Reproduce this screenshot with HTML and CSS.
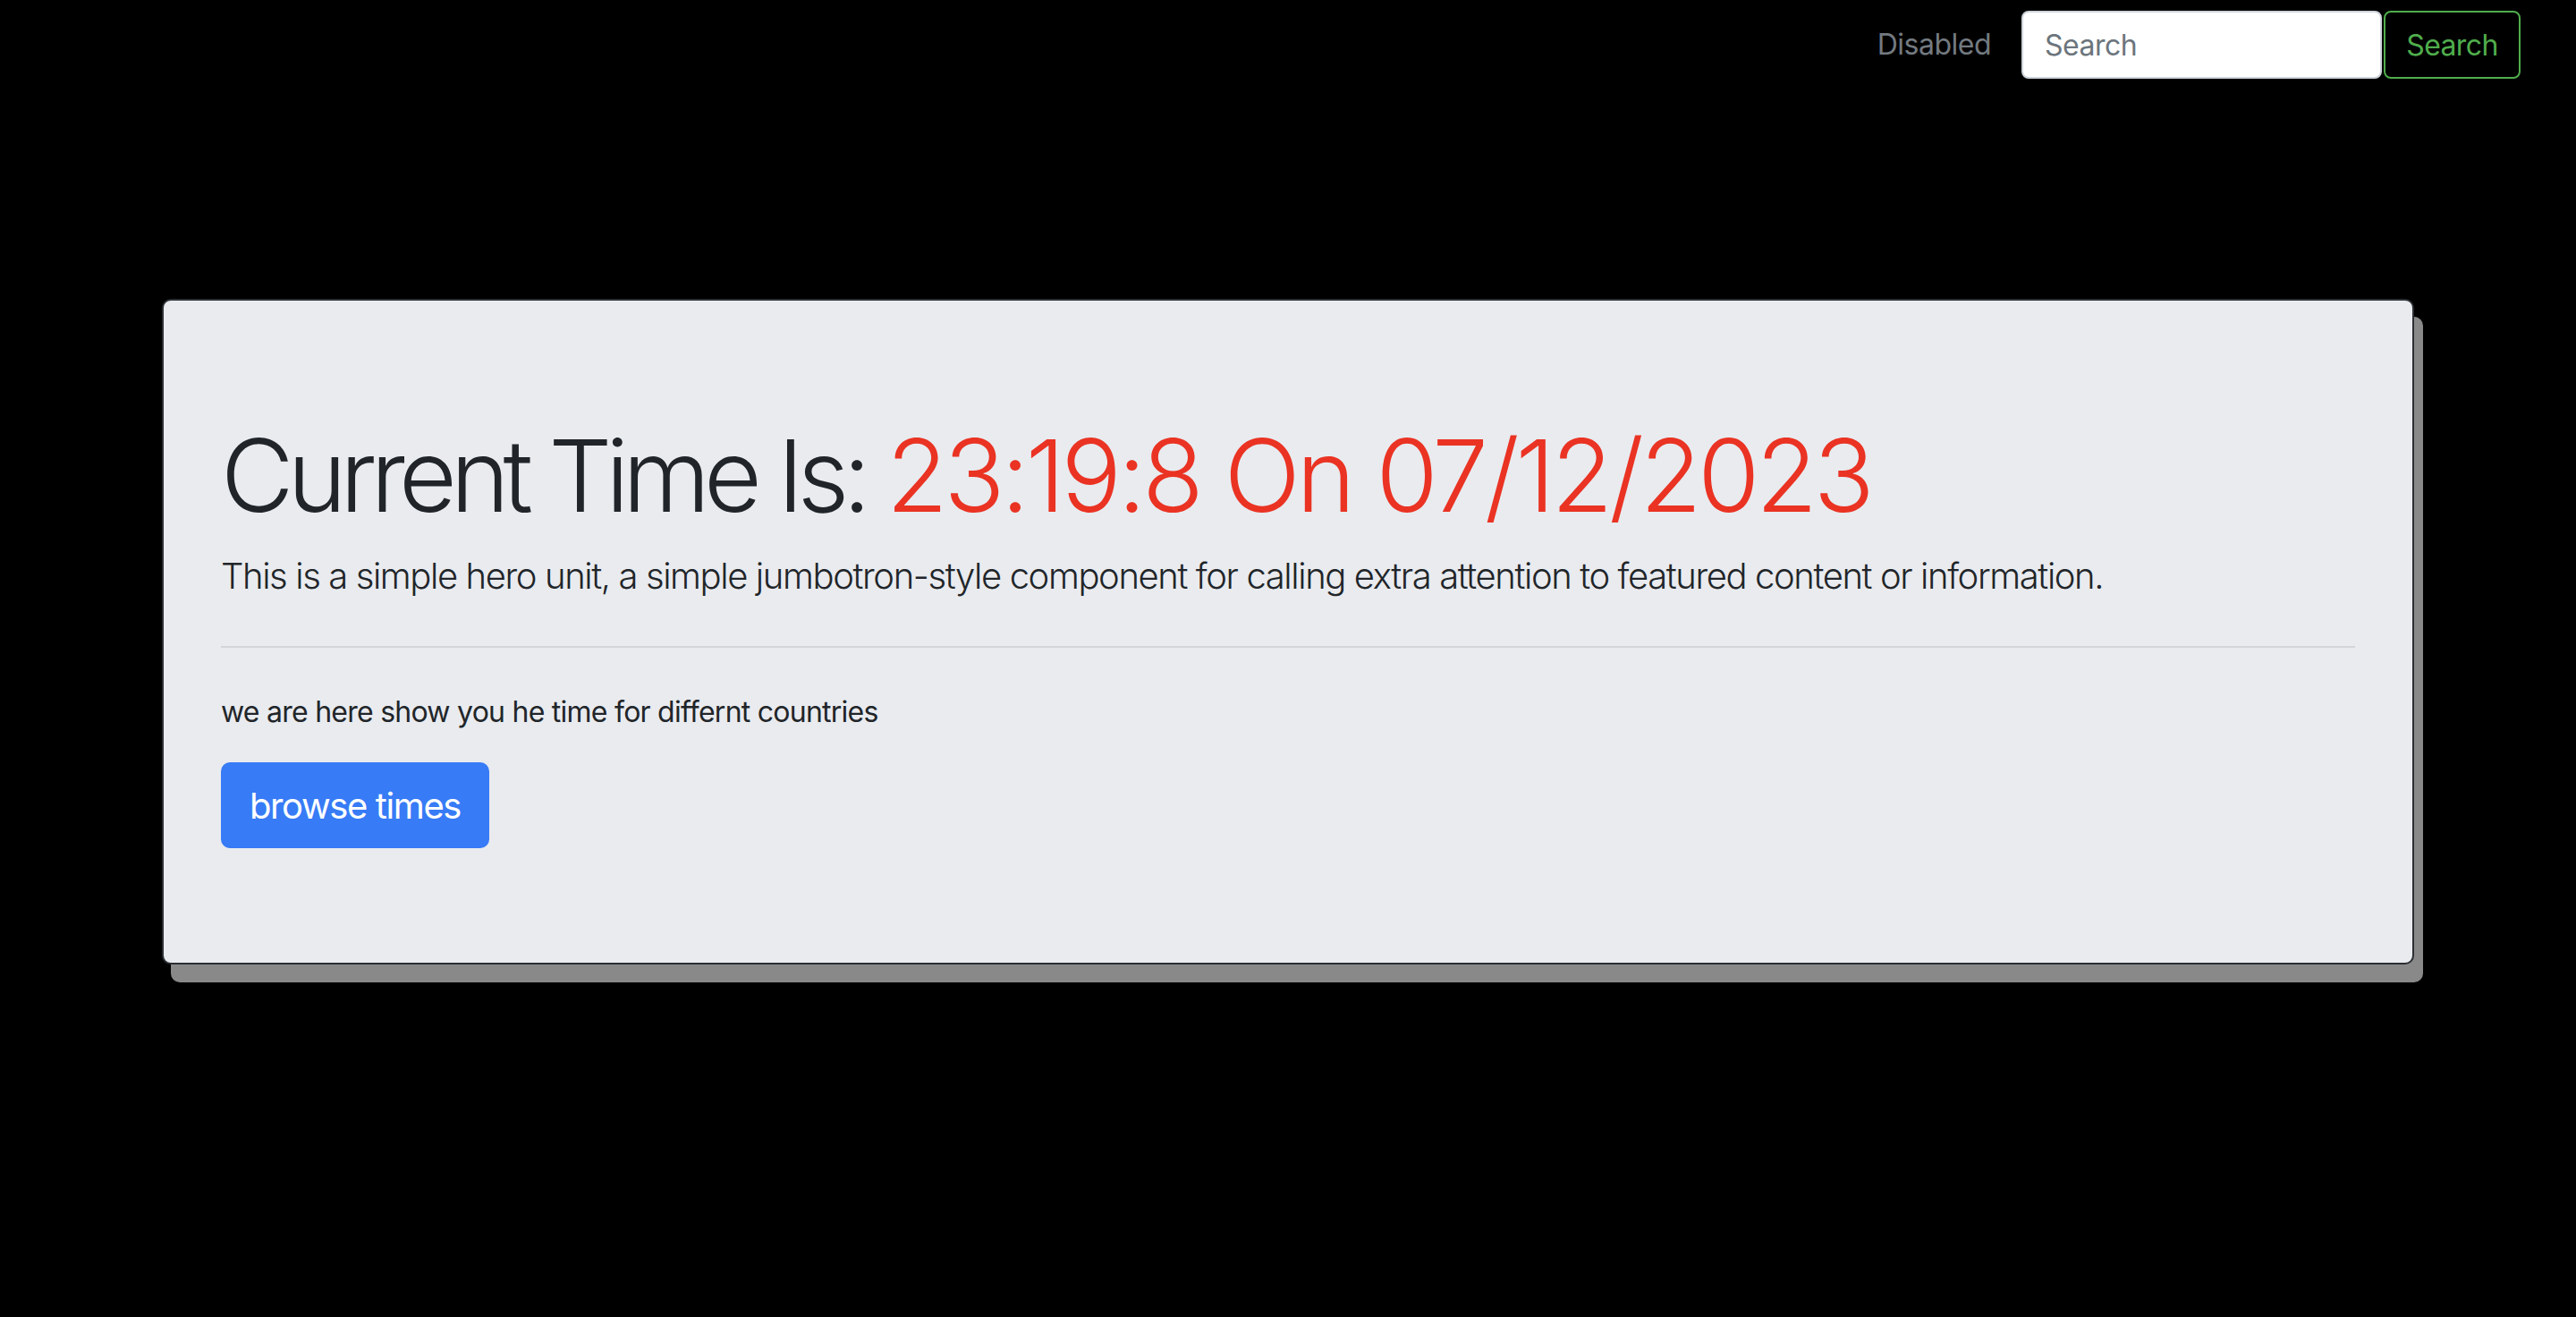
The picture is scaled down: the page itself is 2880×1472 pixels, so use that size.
FILE: index.html
```html
<!DOCTYPE html>
<html lang="en">
<head>
<meta charset="utf-8">
<title>Current Time</title>
<link rel="stylesheet" href="styles.css">
</head>
<body>
<nav class="navbar">
  <span class="nav-disabled">Disabled</span>
  <form class="search-form">
    <input class="search-input" type="search" placeholder="Search">
    <button class="search-btn" type="button">Search</button>
  </form>
</nav>
<main class="hero">
  <h1 class="hero-title">Current Time Is: <span class="time">23:19:8 On 07/12/2023</span></h1>
  <p class="lead">This is a simple hero unit, a simple jumbotron-style component for calling extra attention to featured content or information.</p>
  <hr class="divider">
  <p class="info">we are here show you he time for differnt countries</p>
  <a class="browse-btn" href="#">browse times</a>
</main>
</body>
</html>
```
FILE: styles.css
```css
html, body {
  margin: 0;
  padding: 0;
  background: #000;
}
body {
  font-family: "Inter", "Liberation Sans", sans-serif;
  color: #212529;
  min-height: 1472px;
}
.navbar {
  display: flex;
  justify-content: flex-end;
  align-items: center;
  padding: 12px 62px 12px 0;
}
.nav-disabled {
  font-size: 32px;
  color: #737a80;
  padding-right: 34px;
  line-height: 48px;
  letter-spacing: -0.5px;
}
.search-form {
  display: flex;
  align-items: center;
  gap: 2px;
  margin: 0;
}
.search-input {
  box-sizing: border-box;
  width: 403px;
  height: 76px;
  border: 2px solid #ced4da;
  border-radius: 8px;
  padding: 0 24px;
  font-family: inherit;
  font-size: 32px;
  letter-spacing: -0.5px;
  color: #495057;
  background: #fff;
  outline: none;
}
.search-input::placeholder {
  color: #6c757d;
}
.search-btn {
  box-sizing: border-box;
  width: 153px;
  height: 76px;
  padding: 0;
  border: 2px solid #4fad4c;
  border-radius: 8px;
  background: transparent;
  color: #4fad4c;
  font-family: inherit;
  font-size: 32px;
  letter-spacing: -0.6px;
}
.hero {
  box-sizing: border-box;
  width: 2518px;
  margin: 234px 0 0 181px;
  padding: 128px 64px;
  background: #e9ebef;
  border: 2px solid #2b2e33;
  border-radius: 10px;
  box-shadow: 10px 20px 0 0 #898989;
}
.hero-title {
  margin: 0 0 16px;
  font-size: 112px;
  font-weight: 300;
  line-height: 1.2;
  letter-spacing: -7.1px;
  color: #212529;
}
.time {
  color: #ea3323;
  letter-spacing: -4.2px;
}
.lead {
  margin: 0;
  font-size: 40px;
  font-weight: 300;
  line-height: 60px;
  letter-spacing: -1.4px;
  color: #212529;
}
.divider {
  margin: 48px 0;
  border: 0;
  border-top: 2px solid #d3d5d8;
  height: 0;
}
.info {
  margin: 0 0 32px;
  font-size: 32px;
  line-height: 48px;
  letter-spacing: -0.75px;
  color: #212529;
}
.browse-btn {
  display: inline-flex;
  align-items: center;
  box-sizing: border-box;
  height: 96px;
  padding: 0 32px;
  background: #377bf6;
  color: #fff;
  font-size: 40px;
  letter-spacing: -1.4px;
  border-radius: 10px;
  text-decoration: none;
}
```
